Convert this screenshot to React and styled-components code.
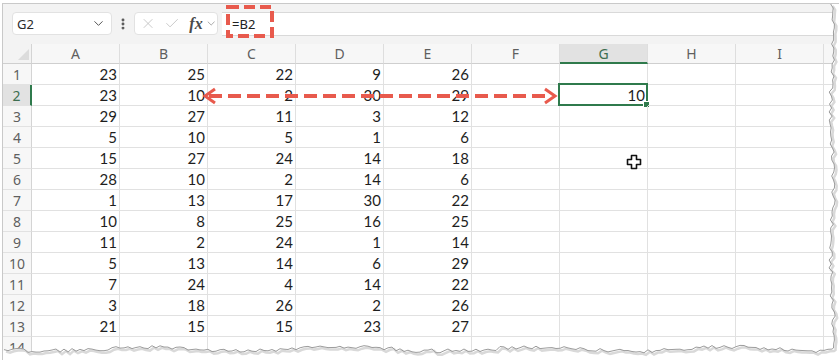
import React from 'react';
import styled, { createGlobalStyle } from 'styled-components';
import { ChevronDown, EllipsisVertical, X, Check } from 'lucide-react';

const Global = createGlobalStyle`
  html, body { margin: 0; padding: 0; background: #ffffff; }
  body { font-family: "Noto Sans", "Open Sans", sans-serif; overflow: hidden; }
`;

const GREEN = '#2f7a4c';
const RED = '#e85a4d';

const Frame = styled.div`
  position: relative;
  margin: 3px 0 0 2px;
  width: 836px;
  height: 356px;
  border-top: 1px solid #c9c9c9;
  border-left: 1px solid #c9c9c9;
  overflow: hidden;
  background: #ffffff;
`;

const Toolbar = styled.div`
  display: flex;
  align-items: flex-start;
  height: 40px;
  box-sizing: border-box;
  padding: 8px 0 0 9px;
  background: #f3f3f3;
`;

const NameBox = styled.div`
  display: flex;
  align-items: center;
  justify-content: space-between;
  box-sizing: border-box;
  width: 100px;
  height: 23px;
  padding: 0 5px 0 4px;
  background: #ffffff;
  border: 1px solid #e2e2e2;
  border-radius: 4px;
  font-size: 13px;
  color: #2b2b2b;
`;

const Dots = styled.div`
  display: flex;
  align-items: center;
  justify-content: center;
  width: 22px;
  height: 23px;
  color: #555;
`;

const FxBox = styled.div`
  display: flex;
  align-items: center;
  box-sizing: border-box;
  width: 84px;
  height: 23px;
  padding: 0 0 0 5px;
  gap: 8px;
  background: #ffffff;
  border: 1px solid #e2e2e2;
  border-radius: 4px;
  color: #bdbdbd;
`;

const Fx = styled.span`
  font-family: "Liberation Serif", "DejaVu Serif", serif;
  font-style: italic;
  font-weight: bold;
  font-size: 16px;
  color: #4a4a4a;
  margin-left: 1px;
  margin-right: -6px;
`;

const FormulaInput = styled.div`
  flex: 1;
  display: flex;
  align-items: center;
  box-sizing: border-box;
  height: 24px;
  margin-left: 4px;
  padding-left: 10px;
  background: #ffffff;
  border-top: 1px solid #d9d9d9;
  border-bottom: 1px solid #d9d9d9;
  font-size: 13px;
  color: #222;
`;

const Grid = styled.div`
  display: grid;
  grid-template-columns: 29px repeat(10, 88px);
  grid-auto-rows: 21px;
  grid-template-rows: 20px;
`;

const Corner = styled.div`
  position: relative;
  background: #f3f3f3;
  border-right: 1px solid #d4d4d4;
  border-bottom: 1px solid #cfcfcf;
  &::after {
    content: '';
    position: absolute;
    right: 2px;
    bottom: 3px;
    border-style: solid;
    border-width: 0 0 11px 11px;
    border-color: transparent transparent #dcdcdc transparent;
  }
`;

const ColHead = styled.div`
  display: flex;
  align-items: center;
  justify-content: center;
  box-sizing: border-box;
  background: ${p => (p.$sel ? '#e2e2e2' : '#f7f7f7')};
  border-right: 1px solid #dedede;
  border-bottom: ${p => (p.$sel ? `2px solid ${GREEN}` : '1px solid #cfcfcf')};
  font-size: 14px;
  color: ${p => (p.$sel ? '#3d6e50' : '#5f5f5f')};
`;

const RowHead = styled.div`
  display: flex;
  align-items: center;
  justify-content: center;
  box-sizing: border-box;
  background: ${p => (p.$sel ? '#e2e2e2' : '#f7f7f7')};
  border-right: ${p => (p.$sel ? `2px solid ${GREEN}` : '1px solid #d4d4d4')};
  border-bottom: 1px solid #e2e2e2;
  font-size: 14px;
  color: ${p => (p.$sel ? '#3d6e50' : '#5f5f5f')};
`;

const Cell = styled.div`
  position: relative;
  display: flex;
  align-items: center;
  justify-content: flex-end;
  box-sizing: border-box;
  padding-right: 2px;
  border-right: 1px solid #e1e1e1;
  border-bottom: 1px solid #e1e1e1;
  font-family: Lato, "Liberation Sans", sans-serif;
  font-size: 15px;
  color: #1e1e1e;
`;

const Selection = styled.span`
  position: absolute;
  left: -2px;
  top: -2px;
  right: -1px;
  bottom: -1px;
  border: 2px solid ${GREEN};
  pointer-events: none;
  &::after {
    content: '';
    position: absolute;
    right: -4px;
    bottom: -4px;
    width: 5px;
    height: 5px;
    background: ${GREEN};
    border: 1px solid #fff;
  }
`;

const Overlay = styled.svg`
  position: absolute;
  left: 0;
  top: 0;
  pointer-events: none;
`;

const COLS = ['A', 'B', 'C', 'D', 'E', 'F', 'G', 'H', 'I', ''];
const DATA = [
  [23, 25, 22, 9, 26],
  [23, 10, 2, 30, 29],
  [29, 27, 11, 3, 12],
  [5, 10, 5, 1, 6],
  [15, 27, 24, 14, 18],
  [28, 10, 2, 14, 6],
  [1, 13, 17, 30, 22],
  [10, 8, 25, 16, 25],
  [11, 2, 24, 1, 14],
  [5, 13, 14, 6, 29],
  [7, 24, 4, 14, 22],
  [3, 18, 26, 2, 26],
  [21, 15, 15, 23, 27],
  [],
];

function jitter(i, seed) {
  const v = Math.sin(i * 12.9898 + seed * 78.233) * 43758.5453;
  return v - Math.floor(v);
}

function tornPoints() {
  const pts = [];
  const RX = 829; // frame coords
  const BY = 345;
  for (let y = 0, i = 0; y < BY; y += 4, i++) {
    pts.push([RX + (jitter(i, 1) - 0.5) * 4 + Math.sin(y / 23) * 1.5, y]);
  }
  for (let x = RX, i = 0; x >= -2; x -= 4, i++) {
    pts.push([x, BY + (jitter(i, 2) - 0.5) * 4 + Math.sin(x / 31) * 2]);
  }
  return pts;
}

const OX = 3;
const OY = 4;

export default function App() {
  const pts = tornPoints();
  const line = pts.map(p => `${p[0].toFixed(1)},${p[1].toFixed(1)}`).join(' ');
  const fillPath = `M 836,0 L ${line} L -2,356 L 836,356 Z`;
  const shadow = pts.map(p => `${(p[0] + 2).toFixed(1)},${(p[1] + 2).toFixed(1)}`).join(' ');

  const ax1 = 205 - OX;
  const ax2 = 555 - OX;
  const ay = 96 - OY;

  return (
    <>
      <Global />
      <Frame>
        <Toolbar>
          <NameBox>
            <span>G2</span>
            <ChevronDown size={15} color="#555" strokeWidth={1.6} />
          </NameBox>
          <Dots>
            <EllipsisVertical size={14} strokeWidth={3} />
          </Dots>
          <FxBox>
            <X size={17} strokeWidth={1.2} />
            <Check size={17} strokeWidth={1.2} />
            <Fx>fx</Fx>
            <ChevronDown size={13} strokeWidth={1.4} color="#888" />
          </FxBox>
          <FormulaInput>=B2</FormulaInput>
        </Toolbar>
        <Grid>
          <Corner />
          {COLS.map((c, i) => (
            <ColHead key={i} $sel={c === 'G'}>{c}</ColHead>
          ))}
          {DATA.map((row, r) => (
            <React.Fragment key={r}>
              <RowHead $sel={r === 1}>{r + 1}</RowHead>
              {COLS.map((c, ci) => (
                <Cell key={ci}>
                  {ci < 5 ? row[ci] : ''}
                  {r === 1 && c === 'G' ? '10' : ''}
                  {r === 1 && c === 'G' ? <Selection /> : null}
                </Cell>
              ))}
            </React.Fragment>
          ))}
        </Grid>
        <Overlay width="836" height="356" viewBox="0 0 836 356">
          {/* dashed box round the formula */}
          <rect x={228 - OX} y={7 - OY} width="44" height="29" fill="none" stroke={RED} strokeWidth="4" strokeDasharray="11 5" />
          {/* double-headed dashed arrow */}
          <line x1={ax1 + 4} y1={ay} x2={ax2 - 4} y2={ay} stroke={RED} strokeWidth="4" strokeDasharray="13 6" />
          <polyline points={`${ax1 + 10},${ay - 7} ${ax1},${ay} ${ax1 + 10},${ay + 7}`} fill="none" stroke={RED} strokeWidth="3" strokeLinejoin="miter" />
          <polyline points={`${ax2 - 10},${ay - 7} ${ax2},${ay} ${ax2 - 10},${ay + 7}`} fill="none" stroke={RED} strokeWidth="3" strokeLinejoin="miter" />
          {/* cell cursor */}
          <g transform={`translate(${627 - OX},${155 - OY})`}>
            <path d="M4.5 0.5 H9.5 V4.5 H13.5 V9.5 H9.5 V13.5 H4.5 V9.5 H0.5 V4.5 H4.5 Z" fill="#fff" stroke="#111" strokeWidth="1.6" strokeLinejoin="round" />
          </g>
          {/* torn paper edge */}
          <path d={fillPath} fill="#ffffff" />
          <polyline points={shadow} fill="none" stroke="#d9d9d9" strokeWidth="2.5" />
          <polyline points={line} fill="none" stroke="#9c9c9c" strokeWidth="1" />
        </Overlay>
      </Frame>
    </>
  );
}
